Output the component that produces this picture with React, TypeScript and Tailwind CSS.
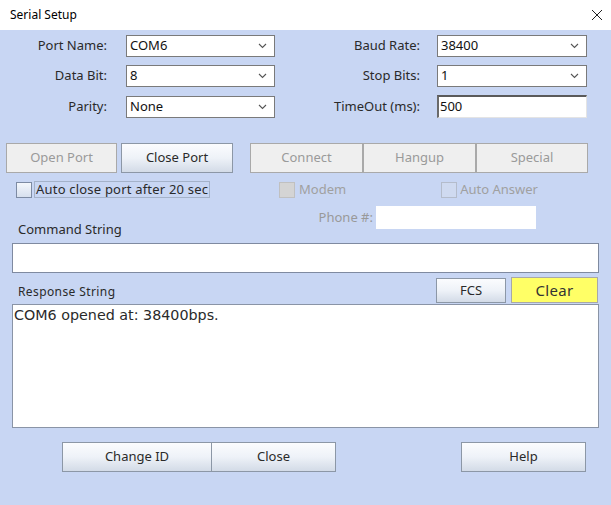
import * as React from 'react';

const FONT = { fontFamily: '"Noto Sans", "Open Sans", sans-serif' };

function Chevron() {
  return (
    <svg width="9" height="6" viewBox="0 0 9 6" className="shrink-0">
      <path d="M1 1 L4.5 4.5 L8 1" fill="none" stroke="#555" strokeWidth="1.1" />
    </svg>
  );
}

function Combo({ value, width }: { value: string; width: string }) {
  return (
    <div className={`flex h-[22px] ${width} items-center justify-between border border-[#7a7a7a] bg-white pl-[3px] pr-[7px] text-[13px] text-[#111]`}>
      <span>{value}</span>
      <Chevron />
    </div>
  );
}

function Label({ text, width }: { text: string; width: string }) {
  return <div className={`${width} text-right text-[13px] text-[#2a2a2a]`}>{text}</div>;
}

function Btn({ label, width, disabled = false, className = '' }: { label: string; width: string; disabled?: boolean; className?: string }) {
  const look = disabled
    ? 'border-[#a9a9a9] bg-[#efefef] text-[#9a9a9a]'
    : 'border-[#8c97a6] bg-gradient-to-b from-[#fbfcfe] via-[#eef2f8] to-[#d3dbe7] text-[#2a2a2a]';
  return (
    <div className={`flex h-[30px] ${width} items-center justify-center border text-[13px] ${look} ${className}`}>{label}</div>
  );
}

export default function App() {
  return (
    <div className="h-[505px] w-[611px] overflow-hidden bg-[#c8d6f3]" style={FONT}>
      {/* Title bar */}
      <div className="flex h-[30px] items-center justify-between bg-white pl-[10px] pr-[8px]">
        <span className="text-[12px] text-black">Serial Setup</span>
        <svg width="12" height="12" viewBox="0 0 12 12">
          <path d="M1 1 L11 11 M11 1 L1 11" stroke="#222" strokeWidth="1" />
        </svg>
      </div>

      {/* Settings */}
      <div className="flex flex-col gap-[8px] pt-[5px]">
        <div className="flex items-center">
          <Label text="Port Name:" width="w-[107px]" />
          <div className="ml-[19px]"><Combo value="COM6" width="w-[149px]" /></div>
          <Label text="Baud Rate:" width="w-[145px]" />
          <div className="ml-[17px]"><Combo value="38400" width="w-[150px]" /></div>
        </div>
        <div className="flex items-center">
          <Label text="Data Bit:" width="w-[107px]" />
          <div className="ml-[19px]"><Combo value="8" width="w-[149px]" /></div>
          <Label text="Stop Bits:" width="w-[145px]" />
          <div className="ml-[17px]"><Combo value="1" width="w-[150px]" /></div>
        </div>
        <div className="flex items-center">
          <Label text="Parity:" width="w-[107px]" />
          <div className="ml-[19px]"><Combo value="None" width="w-[149px]" /></div>
          <Label text="TimeOut (ms):" width="w-[145px]" />
          <div className="ml-[17px] flex h-[23px] w-[150px] items-center border-t-2 border-l-2 border-b border-r border-t-[#5a5a5a] border-l-[#6a6a6a] border-b-[#e4e4e4] border-r-[#e4e4e4] bg-white pl-[1px] text-[13px] text-[#111]">
            500
          </div>
        </div>
      </div>

      {/* Port / modem buttons */}
      <div className="mt-[25px] flex pl-[6px]">
        <Btn label="Open Port" width="w-[111px]" disabled />
        <Btn label="Close Port" width="w-[112px]" className="ml-[4px]" />
        <Btn label="Connect" width="w-[113px]" disabled className="ml-[17px]" />
        <Btn label="Hangup" width="w-[113px]" disabled />
        <Btn label="Special" width="w-[112px]" disabled />
      </div>

      {/* Options */}
      <div className="mt-[8px] flex">
        <div className="flex w-[270px] flex-col pl-[16px]">
          <div className="flex h-[17px] items-center">
            <div className="h-[16px] w-[16px] border border-[#7d8ba3] bg-gradient-to-b from-[#f4f7fc] to-[#d7e0ee]" />
            <div className="ml-[2px] flex h-[17px] items-center border border-[#a4b2c9] px-[1px] text-[13px] tracking-[0.2px] text-[#2a2a2a]">
              Auto close port after 20 sec
            </div>
          </div>
          <div className="mt-[22px] pl-[2px] text-[13px] leading-[18px] text-[#2a2a2a]">Command String</div>
        </div>
        <div className="flex flex-col">
          <div className="flex h-[17px] items-center">
            <div className="ml-[9px] h-[16px] w-[16px] border border-[#c0c0c0] bg-[#d4d4d4]" />
            <span className="ml-[4px] text-[13px] text-[#a0a0a0]">Modem</span>
            <div className="ml-[95px] h-[16px] w-[16px] border border-[#b4bccb] bg-[#cfdaf0]" />
            <span className="ml-[3px] text-[13px] text-[#a0a0a0]">Auto Answer</span>
          </div>
          <div className="mt-[8px] flex items-center">
            <span className="w-[103px] text-right text-[13px] text-[#999]">Phone #:</span>
            <div className="ml-[3px] h-[23px] w-[160px] bg-white" />
          </div>
        </div>
      </div>

      {/* Command field */}
      <div className="mx-[12px] mt-[5px] h-[30px] border border-[#7f8aa0] bg-white" />

      {/* Response */}
      <div className="mt-[4px] flex items-end pl-[18px] pr-[13px]">
        <span className="mb-[2px] text-[12px] tracking-[0.4px] text-[#2a2a2a]">Response String</span>
        <div className="ml-auto flex h-[25px] w-[70px] items-center justify-center border border-[#8c97a6] bg-gradient-to-b from-[#fbfcfe] via-[#eef2f8] to-[#d3dbe7] text-[13px] text-[#2a2a2a]">
          FCS
        </div>
        <div className="ml-[5px] flex h-[26px] w-[87px] items-center justify-center border border-[#a8a8a8] bg-[#ffff66] text-[15px] tracking-[0.3px] text-[#333]">
          Clear
        </div>
      </div>
      <div
        className="mx-[12px] mt-[1px] h-[124px] border border-[#8a94a6] bg-white px-[1px] text-[14.3px] leading-[20px] text-[#2a2a2a]"
        style={{ fontFamily: '"DejaVu Sans", sans-serif' }}
      >
        COM6 opened at: 38400bps.
      </div>

      {/* Bottom buttons */}
      <div className="mt-[14px] flex pl-[62px]">
        <Btn label="Change ID" width="w-[150px]" />
        <Btn label="Close" width="w-[125px]" className="-ml-px" />
        <Btn label="Help" width="w-[125px]" className="ml-[125px]" />
      </div>
    </div>
  );
}
